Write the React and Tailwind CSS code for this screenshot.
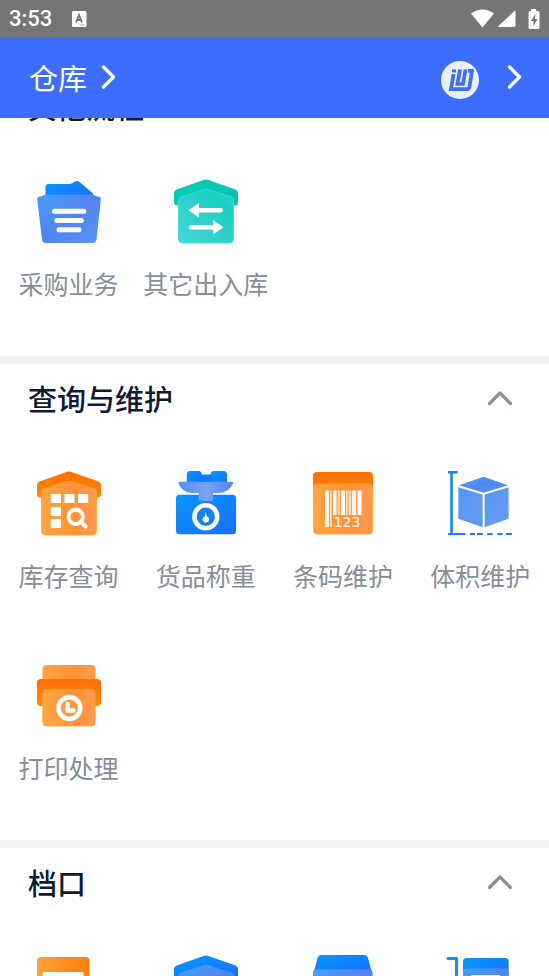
import { useState } from 'react'

// Shared gradients, referenced by id from every icon
function Gradients() {
  return (
    <svg width="0" height="0" className="absolute" aria-hidden="true">
      <defs>
        <linearGradient id="blueDeep" x1="0" y1="0" x2="1" y2="1">
          <stop offset="0" stopColor="#0697ff" />
          <stop offset="1" stopColor="#1a6dff" />
        </linearGradient>
        <linearGradient id="blueSoft" x1="0" y1="0" x2="1" y2="1">
          <stop offset="0" stopColor="#459ffa" />
          <stop offset="0.5" stopColor="#5384ee" />
          <stop offset="1" stopColor="#5a94fb" />
        </linearGradient>
        <linearGradient id="cubeFace" x1="0" y1="0" x2="1" y2="1">
          <stop offset="0" stopColor="#4a97fb" />
          <stop offset="0.6" stopColor="#6698f3" />
          <stop offset="1" stopColor="#5c98fb" />
        </linearGradient>
        <linearGradient id="tray" x1="0" y1="0" x2="1" y2="0">
          <stop offset="0" stopColor="#4f8ef5" />
          <stop offset="0.5" stopColor="#7ba2f5" />
          <stop offset="1" stopColor="#4f86f0" />
        </linearGradient>
        <linearGradient id="tealDeep" x1="0" y1="0" x2="1" y2="1">
          <stop offset="0" stopColor="#05d0b4" />
          <stop offset="1" stopColor="#06bfae" />
        </linearGradient>
        <linearGradient id="tealSoft" x1="0" y1="1" x2="1" y2="0">
          <stop offset="0" stopColor="#46d8da" />
          <stop offset="0.5" stopColor="#2ccfc9" />
          <stop offset="0.75" stopColor="#16d0c0" />
          <stop offset="1" stopColor="#2cd3cf" />
        </linearGradient>
        <linearGradient id="orangeDeep" x1="0" y1="0" x2="0" y2="1">
          <stop offset="0" stopColor="#ff6f00" />
          <stop offset="1" stopColor="#ff8a0c" />
        </linearGradient>
        <linearGradient id="orangeSoft" x1="0" y1="0" x2="1" y2="0">
          <stop offset="0" stopColor="#ffa544" />
          <stop offset="0.6" stopColor="#ff9238" />
          <stop offset="1" stopColor="#ff9a50" />
        </linearGradient>
        <linearGradient id="orangeCard" x1="0" y1="0" x2="1" y2="0">
          <stop offset="0" stopColor="#ffa23f" />
          <stop offset="1" stopColor="#ff7f0c" />
        </linearGradient>
      </defs>
    </svg>
  )
}

function Icon({ children }) {
  return (
    <svg viewBox="0 0 64 64" className="w-16 h-16 overflow-visible" aria-hidden="true">
      {children}
    </svg>
  )
}

const ROOF = 'M29.5 1Q32 0 34.5 1L61.5 10.5Q64 11.5 64 14V23Q64 26.5 60.5 26.5H3.5Q0 26.5 0 23V14Q0 11.5 2.5 10.5Z'
const HOUSE = 'M30 10.5Q32 9.5 34 10.5L57.5 18Q59.5 18.7 59.5 21V60Q59.5 64 55.5 64H8.5Q4.5 64 4.5 60V21Q4.5 18.7 6.5 18Z'

const PurchaseIcon = () => (
  <Icon>
    <path d="M8.5 20V8Q8.5 5 11.5 5H32Q34 5 35.5 4L38 2.5Q40 1.5 42 2.5L56 14.500V20Z" fill="url(#blueDeep)" />
    <path d="M24 17.5L35 6" stroke="#0a72ee" strokeWidth="0.7" />
    <path d="M3 17.5Q5 17.5 6 16.5Q7 15.5 9 15.5H55Q57 15.5 58 16.5Q59 17.5 61 17.5Q64 17.5 63.8 20.5L59.5 60.5Q59 64 55.5 64H9Q5.5 64 5 60.5L0.2 20.5Q0 17.5 3 17.5Z" fill="url(#blueSoft)" />
    <path d="M17.5 32.3H46.8M19.8 41.6H44.3M22 50.7H42" stroke="#fff" strokeWidth="5" strokeLinecap="round" />
  </Icon>
)

const InOutIcon = () => (
  <Icon>
    <path d={ROOF} fill="url(#tealDeep)" />
    <path d={HOUSE} fill="url(#tealSoft)" stroke="#35e0df" strokeWidth="0.8" />
    <path d="M22 31.2H46.8M17 48.3H40" stroke="#fff" strokeWidth="4.5" strokeLinecap="round" />
    <path d="M14.500 31.2L25 24V38.4ZM49.5 48.3L39 41V55.5Z" fill="#fff" />
  </Icon>
)

const StockIcon = () => (
  <Icon>
    <path d={ROOF} fill="url(#orangeDeep)" />
    <path d={HOUSE} fill="url(#orangeSoft)" stroke="#ffa62c" strokeWidth="0.8" />
    <g fill="#fff">
      <rect x="13.7" y="23" width="10.3" height="9" />
      <rect x="27.4" y="23" width="10" height="9" />
      <rect x="41" y="23" width="10.2" height="9" />
      <rect x="13.7" y="36" width="10.3" height="9" />
      <rect x="13.7" y="48" width="10.3" height="9" />
    </g>
    <circle cx="38.7" cy="45.7" r="7.2" fill="none" stroke="#fff" strokeWidth="3.8" />
    <path d="M43.5 50.5L48.5 55.5" stroke="#fff" strokeWidth="4" strokeLinecap="round" />
  </Icon>
)

const ScaleIcon = () => (
  <Icon>
    <rect x="12.8" y="0" width="15" height="14" rx="3.5" fill="url(#blueDeep)" />
    <rect x="36.5" y="0" width="16.5" height="14" rx="3.5" fill="url(#blueDeep)" />
    <rect x="24.5" y="3.5" width="14" height="10" rx="2" fill="#087cf5" />
    <rect x="2" y="23.7" width="60" height="39.5" rx="3.5" fill="url(#blueDeep)" />
    <path d="M5.500 10.8H58Q59.500 10.8 59 12.5Q55 21.5 45 22H39V30H24.8V22H18Q8 21.5 4.5 12.5Q4 10.8 5.5 10.8Z" fill="url(#tray)" />
    <circle cx="31.8" cy="45.7" r="11.4" fill="#1780ff" stroke="#fff" strokeWidth="4.6" />
    <path d="M31.8 40.5L32.7 45.200A3.300 3.300 0 1 1 30.900 45.200Z" fill="#fff" />
  </Icon>
)

const BarcodeIcon = () => (
  <Icon>
    <rect x="2" y="1" width="60" height="30" rx="4" fill="url(#orangeDeep)" />
    <rect x="2.4" y="13" width="59.2" height="50" rx="3.5" fill="url(#orangeSoft)" stroke="#ffa424" strokeWidth="0.8" />
    <g fill="#fff">
      <rect x="14" y="19.5" width="3.8" height="36.5" />
      <rect x="19" y="19.5" width="1.6" height="36.5" opacity="0.7" />
      <rect x="22" y="19.5" width="3.5" height="24.5" />
      <rect x="26.7" y="19.5" width="2.4" height="24.5" opacity="0.6" />
      <rect x="30" y="19.5" width="4" height="24.5" />
      <rect x="35" y="19.5" width="1.6" height="24.5" opacity="0.7" />
      <rect x="37.6" y="19.5" width="2.6" height="24.5" opacity="0.7" />
      <rect x="41.2" y="19.5" width="4" height="24.5" />
      <rect x="46.6" y="19.5" width="4" height="24.5" />
    </g>
    <text x="36" y="56" textAnchor="middle" fontSize="14" className="font-['DejaVu_Sans',sans-serif]" fill="#fff">123</text>
  </Icon>
)

const VolumeIcon = () => (
  <Icon>
    <g fill="none" stroke="#1583ff" strokeWidth="2.6">
      <path d="M0 1.3H9.6M3.5 1.3V63" />
      <path d="M0 63H17.3M22 63H27M29 63H35M39.3 63H44.6M49.3 63H54.6M58 63H64" strokeWidth="2.2" />
    </g>
    <path d="M35.6 5.7L60 14.3L35.6 21.7L11 14.3Z" fill="url(#blueSoft)" />
    <path d="M10.3 16.2L34.6 23.5V56.3L10.3 47.7Z" fill="url(#cubeFace)" />
    <path d="M60.6 16.2L36.7 23.5V56.3L60.6 47.7Z" fill="url(#cubeFace)" />
  </Icon>
)

const PrintIcon = () => (
  <Icon>
    <rect x="5.5" y="2" width="53" height="26" rx="4" fill="url(#orangeSoft)" />
    <rect x="0" y="16" width="64" height="27" rx="4" fill="url(#orangeDeep)" />
    <rect x="5.8" y="26.3" width="52.4" height="36.7" rx="4" fill="url(#orangeSoft)" stroke="#ffa22e" strokeWidth="0.8" />
    <circle cx="32.4" cy="45" r="10.9" fill="#ff9a3c" stroke="#fff" strokeWidth="4.6" />
    <path d="M30.6 41V47.5H36.5" fill="none" stroke="#fff" strokeWidth="4.4" strokeLinecap="round" strokeLinejoin="round" />
  </Icon>
)

const OrderIcon = () => (
  <Icon>
    <rect x="0" y="2" width="52.5" height="62" rx="4" fill="url(#orangeCard)" />
    <rect x="5.7" y="17" width="41" height="14" rx="1.5" fill="#fff" />
  </Icon>
)

const DepotIcon = () => (
  <Icon>
    <path d={ROOF} fill="url(#blueDeep)" />
    <path d={HOUSE} fill="url(#blueSoft)" stroke="#2f9dff" strokeWidth="0.8" />
  </Icon>
)

const ShopIcon = () => (
  <Icon>
    <path d="M10 0H53Q56 0 57 3L61.5 20H2L6.5 3Q7.5 0 10 0Z" fill="url(#blueDeep)" />
    <rect x="2" y="14.5" width="59.5" height="48" rx="3" fill="url(#blueSoft)" />
  </Icon>
)

const CartIcon = () => (
  <Icon>
    <path d="M0 3.5H8.5V64" fill="none" stroke="#0c90ff" strokeWidth="3" strokeLinecap="round" strokeLinejoin="round" />
    <rect x="15" y="3" width="45.6" height="30" rx="3.5" fill="url(#blueDeep)" />
    <rect x="15" y="13.5" width="45.6" height="40" rx="3" fill="url(#blueSoft)" />
    <rect x="23.5" y="20" width="28.5" height="6" fill="#fff" />
  </Icon>
)

const SECTIONS = [
  {
    id: 'flow',
    title: '其他流程',
    items: [
      { label: '采购业务', icon: PurchaseIcon },
      { label: '其它出入库', icon: InOutIcon },
    ],
  },
  {
    id: 'query',
    title: '查询与维护',
    items: [
      { label: '库存查询', icon: StockIcon },
      { label: '货品称重', icon: ScaleIcon },
      { label: '条码维护', icon: BarcodeIcon },
      { label: '体积维护', icon: VolumeIcon },
      { label: '打印处理', icon: PrintIcon },
    ],
  },
  {
    id: 'stall',
    title: '档口',
    items: [
      { id: 'order', icon: OrderIcon },
      { id: 'depot', icon: DepotIcon },
      { id: 'shop', icon: ShopIcon },
      { id: 'cart', icon: CartIcon },
    ],
  },
]

function StatusBar() {
  return (
    <div className="flex h-[37px] shrink-0 items-center justify-between bg-[#757575] px-[9px] text-white">
      <div className="flex items-center gap-5">
        <span className="font-['Roboto',sans-serif] text-[22px] font-medium leading-6">3:53</span>
        <svg width="15" height="16" viewBox="0 0 15 16" aria-hidden="true">
          <rect width="14.5" height="16" rx="1.5" fill="#fff" />
          <path d="M4 11.5L7 4L10 11.5M5 9H9" fill="none" stroke="#757575" strokeWidth="1.8" />
          <path d="M7.5 14H13" stroke="#757575" strokeWidth="0.8" strokeDasharray="1.2 0.5" />
        </svg>
      </div>
      <svg width="69" height="20" viewBox="0 0 69 20" fill="#fff" aria-hidden="true">
        <path d="M0 4.5Q11.5 -3.5 23 4.5L11.5 18.5Z" />
        <path d="M44.5 1V16.500Q44.500 18 43 18H28Q26.5 18 27.500 17Z" />
        <path d="M60 -1H65V1H67Q68.5 1 68.5 2.5V17.5Q68.5 19 67 19H59Q57.5 19 57.5 17.5V2.5Q57.5 1 59 1H60Z" className="translate-y-px" />
        <path d="M64.5 5L60 12H62.5V17L66.5 10H64Z" fill="#757575" />
      </svg>
    </div>
  )
}

function ChevronRight() {
  return (
    <svg width="15" height="24" viewBox="0 0 15 24" fill="none" aria-hidden="true">
      <path d="M2.5 2L12.5 12L2.5 22" stroke="#fff" strokeWidth="3.2" strokeLinecap="round" strokeLinejoin="round" />
    </svg>
  )
}

function Logo() {
  return (
    <svg width="38" height="38" viewBox="0 0 38 38" aria-hidden="true">
      <circle cx="19" cy="19" r="19" fill="#ebf0ff" />
      <g fill="none" stroke="#3d6dff" strokeWidth="3.7">
        <path d="M11 9.9H15" strokeWidth="3" />
        <path d="M12.6 13.2L9.9 28.2H26Q28 28.2 28.4 26L31 9.9H27.2" />
        <path d="M19 8.5L16.4 23H22L24.6 8.5" />
      </g>
    </svg>
  )
}

function Header() {
  return (
    <header className="flex h-[81px] shrink-0 items-center justify-between bg-[#3d6dff] pr-[27px] pb-0.5 pl-[29px] text-white">
      <button className="flex items-center gap-3.5">
        <span className="text-[29px] font-normal leading-10">仓库</span>
        <ChevronRight />
      </button>
      <div className="flex items-center gap-7">
        <button className="pt-1.5" aria-label="iW">
          <Logo />
        </button>
        <button aria-label="更多">
          <ChevronRight />
        </button>
      </div>
    </header>
  )
}

function Section({ title, items }) {
  const [open, setOpen] = useState(true)

  return (
    <section className="border-b-8 border-[#f2f3f5] pb-[22px]">
      <button
        onClick={() => setOpen(!open)}
        aria-expanded={open}
        className="flex h-[68px] w-full items-center justify-between pl-7 pr-9"
      >
        <h2 className="text-[29px] font-medium leading-10 text-[#0f1a35]">{title}</h2>
        <svg width="26" height="16" viewBox="0 0 26 16" fill="none" className={open ? '' : 'rotate-180'} aria-hidden="true">
          <path d="M2.5 13.5L13 3L23.5 13.5" stroke="#8a8fa3" strokeWidth="3.2" strokeLinecap="round" strokeLinejoin="round" />
        </svg>
      </button>
      {open && (
        <div className="grid grid-cols-4 pt-0.5">
          {items.map(({ id, label, icon: ItemIcon }) => (
            <button key={id ?? label} aria-label={label ?? id} className="flex h-48 flex-col items-center gap-[22px] pt-[37px]">
              <ItemIcon />
              {label && (
                <span className="whitespace-nowrap text-[25px] font-normal leading-9 text-[#858e9c]">{label}</span>
              )}
            </button>
          ))}
        </div>
      )}
    </section>
  )
}

export default function App() {
  return (
    <div className="flex h-screen flex-col overflow-hidden bg-white font-['Noto_Sans_CJK_SC',sans-serif]">
      <Gradients />
      <StatusBar />
      <Header />
      <main className="min-h-0 flex-1 overflow-hidden">
        {/* list is scrolled part-way under the header */}
        <div className="-mt-[46px]">
          {SECTIONS.map(s => (
            <Section key={s.id} title={s.title} items={s.items} />
          ))}
        </div>
      </main>
    </div>
  )
}
